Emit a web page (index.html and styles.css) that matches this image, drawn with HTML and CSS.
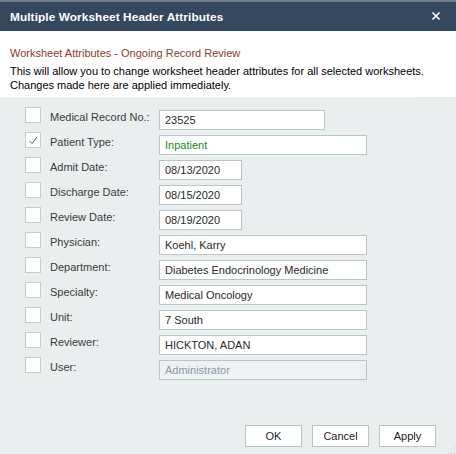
FILE: index.html
```html
<!DOCTYPE html>
<html>
<head>
<meta charset="utf-8">
<link rel="stylesheet" href="styles.css">
</head>
<body>
<div class="dialog">
  <div class="titlebar">
    <span class="title">Multiple Worksheet Header Attributes</span>
    <svg class="close" width="10" height="10" viewBox="0 0 10 10"><path d="M1.5 1.5 L8.5 8.5 M8.5 1.5 L1.5 8.5" stroke="#fff" stroke-width="1.6"/></svg>
  </div>
  <div class="header">
    <div class="subtitle">Worksheet Attributes - Ongoing Record Review</div>
    <div class="desc">This will allow you to change worksheet header attributes for all selected worksheets.<br>Changes made here are applied immediately.</div>
    <div class="sep"></div>
  </div>
  <div class="form">
    <div class="row"><span class="cb"></span><span class="label">Medical Record No.:</span><div class="field w-md">23525</div></div>
    <div class="row"><span class="cb"><svg width="14" height="14" viewBox="0 0 14 14"><polyline points="3.5,8 6,10.5 11,4" fill="none" stroke="#6a6a6a" stroke-width="1"/></svg></span><span class="label">Patient Type:</span><div class="field w-lg green">Inpatient</div></div>
    <div class="row"><span class="cb"></span><span class="label">Admit Date:</span><div class="field w-sm">08/13/2020</div></div>
    <div class="row"><span class="cb"></span><span class="label">Discharge Date:</span><div class="field w-sm">08/15/2020</div></div>
    <div class="row"><span class="cb"></span><span class="label">Review Date:</span><div class="field w-sm">08/19/2020</div></div>
    <div class="row"><span class="cb"></span><span class="label">Physician:</span><div class="field w-lg">Koehl, Karry</div></div>
    <div class="row"><span class="cb"></span><span class="label">Department:</span><div class="field w-lg">Diabetes Endocrinology Medicine</div></div>
    <div class="row"><span class="cb"></span><span class="label">Specialty:</span><div class="field w-lg">Medical Oncology</div></div>
    <div class="row"><span class="cb"></span><span class="label">Unit:</span><div class="field w-lg">7 South</div></div>
    <div class="row"><span class="cb"></span><span class="label">Reviewer:</span><div class="field w-lg">HICKTON, ADAN</div></div>
    <div class="row"><span class="cb"></span><span class="label">User:</span><div class="field w-lg disabled">Administrator</div></div>
  </div>
  <div class="footer">
    <button class="btn">OK</button>
    <button class="btn">Cancel</button>
    <button class="btn">Apply</button>
  </div>
  <svg class="grip" width="10" height="10" viewBox="0 0 10 10">
    <rect x="8" y="2" width="1" height="1" fill="#c4cccc"/>
    <rect x="5" y="5" width="1" height="1" fill="#c4cccc"/>
    <rect x="8" y="5" width="1" height="1" fill="#c4cccc"/>
    <rect x="2" y="8" width="1" height="1" fill="#c4cccc"/>
    <rect x="5" y="8" width="1" height="1" fill="#c4cccc"/>
    <rect x="8" y="8" width="1" height="1" fill="#c4cccc"/>
  </svg>
</div>
</body>
</html>
```
FILE: styles.css
```css
html, body {
  margin: 0;
  padding: 0;
  background: #eaeeee;
}
.dialog {
  position: relative;
  width: 456px;
  height: 454px;
  display: flex;
  flex-direction: column;
  font-family: "Liberation Sans", Arial, sans-serif;
  font-size: 11px;
  color: #000;
  overflow: hidden;
}
.titlebar {
  height: 29px;
  border-top: 2px solid #76808a;
  background: #34495e;
  display: flex;
  align-items: center;
  justify-content: space-between;
  padding: 0 15px 0 10px;
}
.title {
  color: #fff;
  font-weight: bold;
  font-size: 11.8px;
  letter-spacing: 0.1px;
}
.close {
  display: block;
  margin-top: -1px;
}
.header {
  background: #fff;
  height: 66px;
  padding: 15px 0 0 10px;
  box-sizing: border-box;
}
.subtitle {
  color: #8b3d1f;
  line-height: 14px;
}
.desc {
  margin-top: 4px;
  line-height: 14px;
}
.sep {
  margin: 5px 0 0 -10px;
  width: 420px;
  border-top: 1px solid #eef1f1;
}
.form {
  padding: 10px 0 0 25px;
}
.row {
  display: flex;
  align-items: flex-start;
  height: 25px;
}
.cb {
  width: 14px;
  height: 14px;
  border: 1px solid #c5cdcd;
  background: #fff;
  display: flex;
}
.label {
  margin: 3px 0 0 9px;
  width: 109px;
  color: #3c3c3c;
  line-height: 14px;
}
.field {
  margin-top: 3px;
  height: 18px;
  border: 1px solid #b9c6c6;
  background: #fff;
  box-sizing: content-box;
  padding: 0 5px;
  line-height: 18px;
  color: #2a2a2a;
  white-space: nowrap;
}
.w-sm { width: 71px; }
.w-md { width: 154px; }
.w-lg { width: 196px; }
.green { color: #188a18; }
.disabled {
  background: #eef1f1;
  color: #8a9aaa;
}
.footer {
  margin-top: auto;
  display: flex;
  justify-content: flex-end;
  gap: 10px;
  padding: 0 20px 7px 0;
}
.btn {
  width: 57px;
  height: 22px;
  border: 1px solid #b9c6c6;
  background: #fff;
  font-family: "Liberation Sans", Arial, sans-serif;
  font-size: 11px;
  color: #222;
  padding: 0;
  margin: 0;
}
.grip {
  position: absolute;
  right: 0;
  bottom: 0;
}
```
